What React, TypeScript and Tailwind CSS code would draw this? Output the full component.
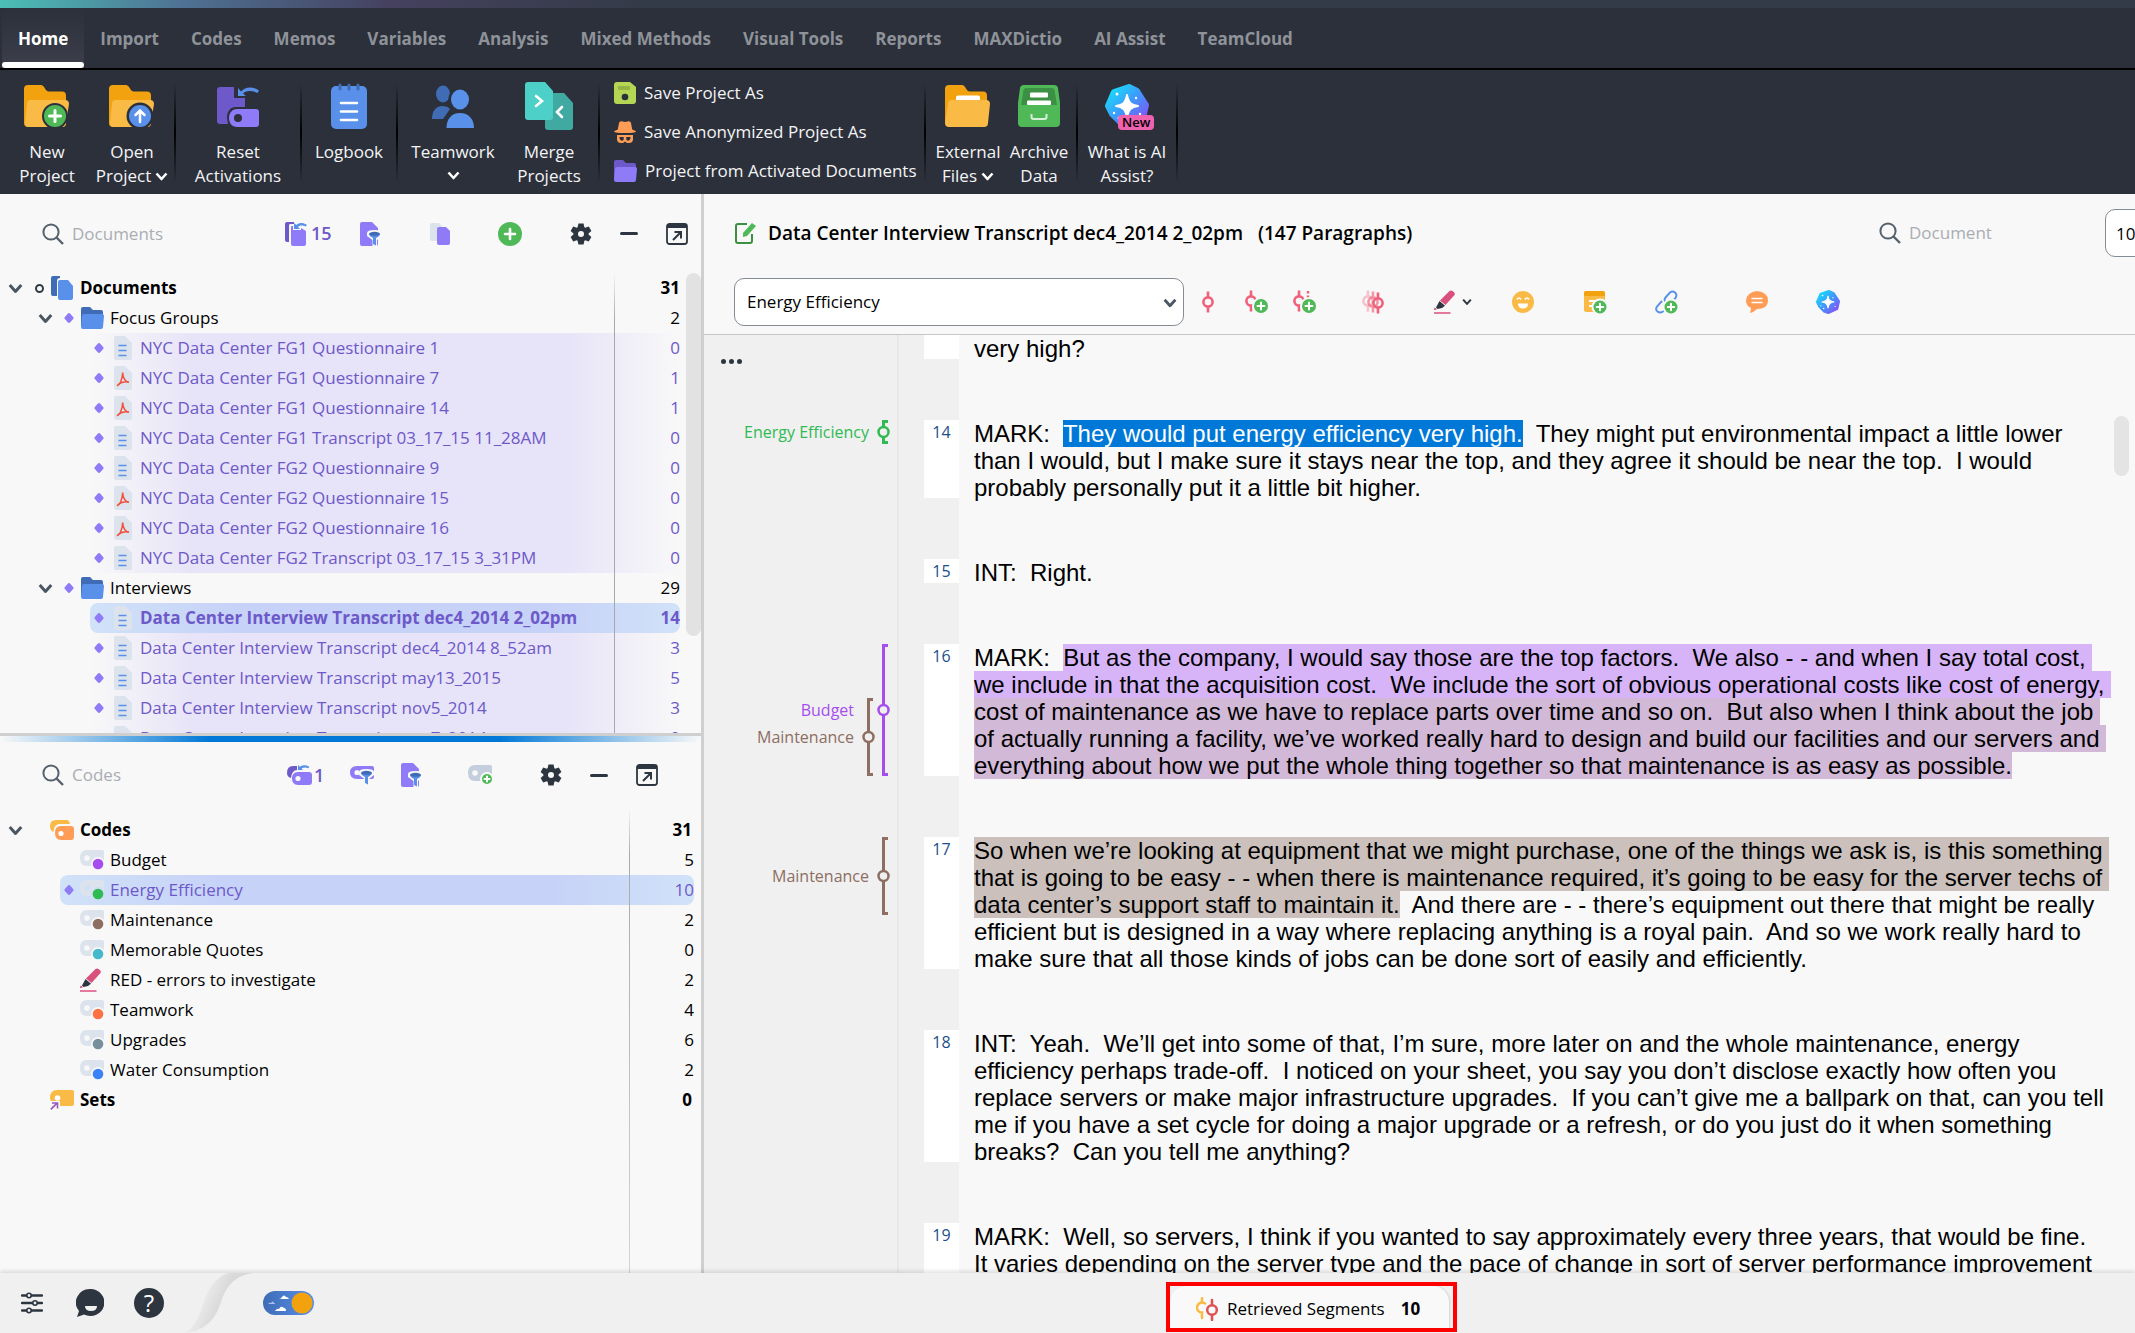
import { useState } from 'react';
import type { ReactNode } from 'react';

type DocKind = 'text' | 'pdf';

interface DocItem {
  name: string;
  kind: DocKind;
  count: number;
  selected?: boolean;
}

interface CodeItem {
  name: string;
  color: string;
  count: number;
  selected?: boolean;
  marker?: boolean;
}

interface Coding {
  label: string;
  color: string;
  top: number;
  height: number;
  knob: number;
  lane: number;
  labelRight: number;
}

interface Paragraph {
  no: number;
  body: ReactNode;
  codings?: Coding[];
}

const TABS = [
  'Home', 'Import', 'Codes', 'Memos', 'Variables', 'Analysis', 'Mixed Methods',
  'Visual Tools', 'Reports', 'MAXDictio', 'AI Assist', 'TeamCloud',
];

const FOCUS_GROUPS: DocItem[] = [
  { name: 'NYC Data Center FG1 Questionnaire 1', kind: 'text', count: 0 },
  { name: 'NYC Data Center FG1 Questionnaire 7', kind: 'pdf', count: 1 },
  { name: 'NYC Data Center FG1 Questionnaire 14', kind: 'pdf', count: 1 },
  { name: 'NYC Data Center FG1 Transcript 03_17_15 11_28AM', kind: 'text', count: 0 },
  { name: 'NYC Data Center FG2 Questionnaire 9', kind: 'text', count: 0 },
  { name: 'NYC Data Center FG2 Questionnaire 15', kind: 'pdf', count: 0 },
  { name: 'NYC Data Center FG2 Questionnaire 16', kind: 'pdf', count: 0 },
  { name: 'NYC Data Center FG2 Transcript 03_17_15 3_31PM', kind: 'text', count: 0 },
];

const INTERVIEWS: DocItem[] = [
  { name: 'Data Center Interview Transcript dec4_2014 2_02pm', kind: 'text', count: 14, selected: true },
  { name: 'Data Center Interview Transcript dec4_2014 8_52am', kind: 'text', count: 3 },
  { name: 'Data Center Interview Transcript may13_2015', kind: 'text', count: 5 },
  { name: 'Data Center Interview Transcript nov5_2014', kind: 'text', count: 3 },
  { name: 'Data Center Interview Transcript nov7_2014', kind: 'text', count: 0 },
];

const CODES: CodeItem[] = [
  { name: 'Budget', color: '#a64df0', count: 5 },
  { name: 'Energy Efficiency', color: '#2fbb52', count: 10, selected: true },
  { name: 'Maintenance', color: '#8d6e63', count: 2 },
  { name: 'Memorable Quotes', color: '#45b9cb', count: 0 },
  { name: 'RED - errors to investigate', color: '#d9507d', count: 2, marker: true },
  { name: 'Teamwork', color: '#ff7043', count: 4 },
  { name: 'Upgrades', color: '#78909c', count: 6 },
  { name: 'Water Consumption', color: '#3b82f6', count: 2 },
];

const PARAGRAPHS: Paragraph[] = [
  {
    no: 14,
    body: (
      <>
        {'MARK:  '}
        <span className="bg-[#0078d7] text-white">They would put energy efficiency very high.</span>
        {'  They might put environmental impact a little lower than I would, but I make sure it stays near the top, and they agree it should be near the top.  I would probably personally put it a little bit higher.'}
      </>
    ),
    codings: [{ label: 'Energy Efficiency', color: '#2fbb52', top: 0, height: 24, knob: 12, lane: 15, labelRight: 29 }],
  },
  { no: 15, body: 'INT:  Right.' },
  {
    no: 16,
    body: (
      <>
        {'MARK:  '}
        <span className="bg-[#d6b4f7]">
          {'But as the company, I would say those are the top factors.  We also - - and when I say total cost, we include in that the acquisition cost.  We include the sort of obvious operational costs like cost of energy, '}
        </span>
        <span className="bg-[#d2b9d8]">
          {'cost of maintenance as we have to replace parts over time and so on.  But also when I think about the job of actually running a facility, we’ve worked really hard to design and build our facilities and our servers and everything about how we put the whole thing together so that maintenance is as easy as possible.'}
        </span>
      </>
    ),
    codings: [
      { label: 'Budget', color: '#a64df0', top: 0, height: 132, knob: 66, lane: 15, labelRight: 44 },
      { label: 'Maintenance', color: '#8d6e63', top: 54, height: 78, knob: 93, lane: 30, labelRight: 44 },
    ],
  },
  {
    no: 17,
    body: (
      <>
        <span className="bg-[#cbc0bb]">
          {'So when we’re looking at equipment that we might purchase, one of the things we ask is, is this something that is going to be easy - - when there is maintenance required, it’s going to be easy for the server techs of data center’s support staff to maintain it.'}
        </span>
        {'  And there are - - there’s equipment out there that might be really efficient but is designed in a way where replacing anything is a royal pain.  And so we work really hard to make sure that all those kinds of jobs can be done sort of easily and efficiently.'}
      </>
    ),
    codings: [{ label: 'Maintenance', color: '#8d6e63', top: 0, height: 78, knob: 39, lane: 15, labelRight: 29 }],
  },
  {
    no: 18,
    body: 'INT:  Yeah.  We’ll get into some of that, I’m sure, more later on and the whole maintenance, energy efficiency perhaps trade-off.  I noticed on your sheet, you say you don’t disclose exactly how often you replace servers or make major infrastructure upgrades.  If you can’t give me a ballpark on that, can you tell me if you have a set cycle for doing a major upgrade or a refresh, or do you just do it when something breaks?  Can you tell me anything?',
  },
  {
    no: 19,
    body: 'MARK:  Well, so servers, I think if you wanted to say approximately every three years, that would be fine.  It varies depending on the server type and the pace of change in sort of server performance improvement',
  },
];

/* ---------- small icons ---------- */

function Chevron({ className = 'text-white', size = 13 }: { className?: string; size?: number }) {
  return (
    <svg width={size} height={size} viewBox="0 0 13 13" fill="none" className={`shrink-0 ${className}`}>
      <path d="M1.5 3.5 6.5 9l5-5.5" stroke="currentColor" strokeWidth="2.6" strokeLinejoin="round" />
    </svg>
  );
}

function SearchIcon() {
  return (
    <svg width="22" height="22" viewBox="0 0 22 22" fill="none" stroke="#56616e" strokeWidth="2" className="shrink-0">
      <circle cx="9" cy="9" r="7.6" />
      <path d="m14.5 14.5 6.5 6.5" strokeWidth="2.4" />
    </svg>
  );
}

function PlusBadge({ cx, cy, r, ring }: { cx: number; cy: number; r: number; ring: string }) {
  const a = r * 0.5;
  return (
    <g>
      <circle cx={cx} cy={cy} r={r + 2} fill={ring} />
      <circle cx={cx} cy={cy} r={r} fill="#50b957" />
      <path d={`M${cx - a} ${cy}h${2 * a}M${cx} ${cy - a}v${2 * a}`} stroke="#fff" strokeWidth={r > 8 ? 3 : 2} strokeLinecap="round" />
    </g>
  );
}

function FolderShape() {
  return (
    <>
      <path d="M0 4a4 4 0 0 1 4-4h12c2 0 3 .6 4 2l2 3c1 1 2 1.5 4 1.5h12a4 4 0 0 1 4 4V38a4 4 0 0 1-4 4H4a4 4 0 0 1-4-4Z" fill="#f2a20f" />
      <path d="M3 19a4 4 0 0 1 4-4h34a4 4 0 0 1 4 4l-3 19a4 4 0 0 1-4 4H5a4 4 0 0 1-4-4Z" fill="#fabb46" />
    </>
  );
}

function NewProjectIcon() {
  return (
    <svg width="46" height="44" viewBox="0 -1 46 44">
      <FolderShape />
      <PlusBadge cx={31} cy={31} r={11} ring="#2b303b" />
    </svg>
  );
}

function OpenProjectIcon() {
  return (
    <svg width="46" height="44" viewBox="0 -1 46 44">
      <FolderShape />
      <circle cx="31" cy="31" r="13.5" fill="#2b303b" />
      <circle cx="31" cy="31" r="11" fill="#5990ea" />
      <path d="M31 37V26M26.5 30l4.5-4.5 4.5 4.5" stroke="#fff" strokeWidth="2.5" fill="none" strokeLinecap="round" />
    </svg>
  );
}

function ResetIcon() {
  return (
    <svg width="44" height="44" viewBox="0 -1 44 44">
      <path d="M4 2h14v11h11v9h-9c-6 0-9 5-9 10 0 3 1 5 1 7H4a3 3 0 0 1-3-3V5a3 3 0 0 1 3-3Z" fill="#6d59c9" />
      <path d="M22 3v8h8l-3-2.500c4-3.500 9-3 14.500-.5l1.500-2.500C37 1.500 30 1 25 6.500Z" fill="#5990ea" />
      <path d="M21 24h19a3 3 0 0 1 3 3v12a3 3 0 0 1-3 3H21c-5 0-8-4-8-9s3-9 8-9Z" fill="#8f7af8" />
      <circle cx="22" cy="33" r="4" fill="#2b303b" />
    </svg>
  );
}

function LogbookIcon() {
  return (
    <svg width="36" height="46" viewBox="0 -2 36 46">
      <rect y="1" width="36" height="43" rx="5" fill="#5990ea" />
      <path d="M9 0v4M18 0v4M27 0v4" stroke="#3f6cb5" strokeWidth="3" strokeLinecap="round" />
      <path d="M10 18h16M10 26.500h16M10 35h16" stroke="#fff" strokeWidth="2.600" strokeLinecap="round" />
    </svg>
  );
}

function TeamworkIcon() {
  return (
    <svg width="42" height="44" viewBox="0 -1 42 44">
      <ellipse cx="11" cy="9" rx="7" ry="8.500" fill="#3f6cb5" />
      <path d="M0 34c0-8 4-13 10-13 4 0 6 1 8 3l-7 10Z" fill="#3f6cb5" />
      <ellipse cx="28" cy="14" rx="11.500" ry="12" fill="#2b303b" />
      <ellipse cx="28" cy="14.500" rx="9" ry="10" fill="#5990ea" />
      <path d="M12 44c0-10 6-18 16-18v18Z" fill="#2b303b" />
      <path d="M14.500 43c0-9 5-15 13.500-15s14 6 14 15Z" fill="#5990ea" />
    </svg>
  );
}

function MergeIcon() {
  return (
    <svg width="48" height="48" viewBox="0 0 48 48">
      <path d="M20 14a3 3 0 0 1 3-3h16l9 10v24a3 3 0 0 1-3 3H23a3 3 0 0 1-3-3Z" fill="#40a9a2" />
      <path d="M0 3a3 3 0 0 1 3-3h17l8 9v26a3 3 0 0 1-3 3H3a3 3 0 0 1-3-3Z" fill="#4dd0c7" />
      <path d="m11 14 6 5-6 5M37 25l-5 5 5 5" stroke="#fff" strokeWidth="2.600" fill="none" strokeLinecap="round" />
    </svg>
  );
}

function SaveIcon() {
  return (
    <svg width="22" height="22" viewBox="0 0 22 22">
      <path d="M0 3a3 3 0 0 1 3-3h13l6 5v14a3 3 0 0 1-3 3H3a3 3 0 0 1-3-3Z" fill="#b4d654" />
      <rect x="4" y="4" width="12" height="4" rx="1" fill="#93b343" />
      <circle cx="11" cy="15" r="3.300" fill="#2b303b" />
    </svg>
  );
}

function AnonymousIcon() {
  return (
    <svg width="22" height="22" viewBox="0 0 22 22" fill="#ff9d57">
      <path d="M5 2Q5.500 0 7.500.2L11 1l3.500-.8Q16.500 0 17 2l1.200 6.500Q22 9.800 22 10.800 21 12 11 12T0 10.800Q0 9.800 3.800 8.500Z" />
      <path d="M3 14h16v4c0 3-2 4-4 4h-2l-2-1.500L9 22H7c-2 0-4-1-4-4Z" />
      <path d="M5.500 16h4.200v2.500q-.5 1.200-2 1.200-2.200-.5-2.200-3.700ZM12.300 16h4.200q0 3.200-2.200 3.700-1.500 0-2-1.200Z" fill="#2b303b" />
    </svg>
  );
}

function MiniFolder({ dark, light }: { dark: string; light: string }) {
  return (
    <svg width="23" height="22" viewBox="0 0 23 22" className="shrink-0">
      <path d="M0 2a2 2 0 0 1 2-2h7l3 3h8a2 2 0 0 1 2 2v14H0Z" fill={dark} />
      <path d="M1 9q0-2 2-2h18q2 0 2 2l-1 11q0 2-2 2H2q-2 0-2-2Z" fill={light} />
    </svg>
  );
}

function ExternalFilesIcon() {
  return (
    <svg width="46" height="44" viewBox="0 -1 46 44">
      <path d="M0 4a4 4 0 0 1 4-4h12c2 0 3 .6 4 2l2 3c1 1 2 1.500 4 1.500h12a4 4 0 0 1 4 4V38H0Z" fill="#f2a20f" />
      <rect x="11" y="10.500" width="24" height="10" rx="2" fill="#fff" />
      <path d="M3 19a4 4 0 0 1 4-4h34a4 4 0 0 1 4 4l-2 19a4 4 0 0 1-4 4H4a4 4 0 0 1-4-4Z" fill="#fabb46" />
    </svg>
  );
}

function ArchiveIcon() {
  return (
    <svg width="42" height="44" viewBox="0 -1 42 44">
      <path d="M6 0h30a4 4 0 0 1 4 3l2 15v20a4 4 0 0 1-4 4H4a4 4 0 0 1-4-4V18L2 3a4 4 0 0 1 4-3Z" fill="#50b957" />
      <path d="M8 3h26q2 0 2.500 2L39 20H3L5.500 5Q6 3 8 3Z" fill="#3c9044" />
      <rect x="12" y="7.500" width="18" height="5" rx="1" fill="#fff" />
      <rect x="9" y="15.500" width="24" height="4.500" rx="1" fill="#fff" />
      <path d="M13.500 29v3q0 2 2 2h11q2 0 2-2v-3" stroke="#d8f0da" strokeWidth="2" fill="none" />
    </svg>
  );
}

function AiGem({ size, id }: { size: number; id: string }) {
  return (
    <svg width={size} height={size} viewBox="0 0 44 44" className="shrink-0">
      <defs>
        <linearGradient id={id} x1="0" y1="0" x2="44" y2="44" gradientUnits="userSpaceOnUse">
          <stop offset="0.1" stopColor="#17e0fb" />
          <stop offset="0.500" stopColor="#3f97fb" />
          <stop offset="1" stopColor="#9a3cf7" />
        </linearGradient>
      </defs>
      <path d="M9 8 24 3l8 4 9 14-3 13-15 7-7-2L7 30 3 22Z" fill={`url(#${id})`} stroke={`url(#${id})`} strokeWidth="6" strokeLinejoin="round" />
      <path d="M22 11c1.500 8 4 10 11 11-7 1-9.500 3.500-11 11-1.500-7.500-4-10-11-11 7-1 9.500-3 11-11Z" fill="#fff" stroke="#fff" strokeWidth="2" strokeLinejoin="round" />
      <circle cx="12" cy="10" r="1.500" fill="#fff" />
      <circle cx="31" cy="14" r="1.200" fill="#fff" />
      <circle cx="9" cy="29" r="1.200" fill="#fff" />
      <circle cx="35" cy="30" r="1.200" fill="#fff" />
      <circle cx="14" cy="34" r="1.500" fill="#fff" />
    </svg>
  );
}

function FileFilterIcon() {
  return (
    <svg width="21" height="24" viewBox="0 0 21 24">
      <path d="M2 0h10l6 6v16q0 2-2 2H2q-2 0-2-2V2q0-2 2-2Z" fill="#8f7af8" />
      <Funnel />
    </svg>
  );
}

function Funnel() {
  return (
    <g>
      <path d="M7 11q0-3 7.500-3T22 11v3l-5 4v6h-4.500v-6L7 14Z" fill="#f8f8f8" />
      <path d="M9 12q0 2 4 4v6l3 1.500V16q4-2 4-4Z" fill="#5990ea" />
      <ellipse cx="14.500" cy="11.800" rx="5.500" ry="2" fill="#3f6cb5" />
    </g>
  );
}

function ActivatedDocsIcon() {
  return (
    <svg width="22" height="24" viewBox="0 0 22 24">
      <path d="M2 0h7v2H5q-1 0-1 2v16H2q-2 0-2-2V2q0-2 2-2Z" fill="#6d59c9" />
      <path d="M7 4h1v4h8V6l5 3v13q0 2-2 2H8q-2 0-2-2V5q0-1 1-1Z" fill="#8f7af8" />
      <path d="M9 1v6h6l-2-2c2-2 4-2 8-.5l.8-1.700C17 0 13.500 1 11.300 3Z" fill="#5990ea" />
    </svg>
  );
}

function ActivatedCodesIcon() {
  return (
    <svg width="25" height="20" viewBox="0 0 25 20">
      <path d="M6 1h4v4q-5 0-6 8-4-1-4-5 0-7 6-7Z" fill="#6d59c9" />
      <path d="M11 0v5h5l-1.500-1.500q3-2 7-.3l.8-1.500Q17 -1 13 1.800Z" fill="#5990ea" />
      <path d="M11 7h11q3 0 3 3v7q0 3-3 3H11q-6 0-6-6.500T11 7Z" fill="#8f7af8" />
      <circle cx="11" cy="13.500" r="2.600" fill="#f8f8f8" />
    </svg>
  );
}

function CodeFilterIcon() {
  return (
    <svg width="25" height="20" viewBox="0 0 25 20">
      <path d="M7 1h15q2 0 2 2v9q0 2-2 2H7q-7 0-7-6.500T7 1Z" fill="#8f7af8" />
      <circle cx="7" cy="7.500" r="2.600" fill="#f8f8f8" />
      <g transform="translate(2 -4)">
        <Funnel />
      </g>
    </svg>
  );
}

function GearIcon() {
  return (
    <svg width="22" height="22" viewBox="-11 -11 22 22" fill="#2d3640">
      {[0, 60, 120, 180, 240, 300].map(a => (
        <path key={a} d="M-2.600-10.500h5.200l.9 4.500h-7Z" transform={`rotate(${a})`} />
      ))}
      <path fillRule="evenodd" d="M0-7.500a7.500 7.500 0 1 1 0 15a7.500 7.500 0 1 1 0-15M0-3a3 3 0 1 0 0 6a3 3 0 1 0 0-6" />
    </svg>
  );
}

function PopOutIcon() {
  return (
    <svg width="22" height="22" viewBox="0 0 22 22" fill="none">
      <rect x="1" y="1" width="20" height="20" rx="2.500" stroke="#2d3640" strokeWidth="1.800" />
      <path d="M1 1h20v4H1Z" fill="#2d3640" />
      <path d="m7 17 7.500-7.500M8.500 9H15v6.500" stroke="#2d3640" strokeWidth="2" />
    </svg>
  );
}

function Diamond() {
  return (
    <svg width="10" height="10" viewBox="0 0 10 10" className="shrink-0">
      <path d="M5 0q.7 0 1.300.8l3 3.400q.6.800 0 1.600l-3 3.400q-1.300 1.600-2.600 0l-3-3.400q-.6-.8 0-1.600l3-3.400Q4.300 0 5 0Z" fill="#8f7af8" />
    </svg>
  );
}

function FileIcon({ kind }: { kind: DocKind }) {
  return (
    <svg width="18" height="24" viewBox="0 0 18 24" className="shrink-0">
      <path d="M2 0h9l7 7v15q0 2-2 2H2q-2 0-2-2V2q0-2 2-2Z" fill="#dce3ec" />
      {kind === 'text' ? (
        <path d="M4.500 9.500h8M4.500 14.500h8M4.500 19.500h8" stroke="#5990ea" strokeWidth="1.600" />
      ) : (
        <path d="M3.500 19.500c2-.5 5-6 5.200-13 .1 5 2.300 9.500 6.300 9.700-4-1-7.500-.4-11 2.500" stroke="#f0503c" strokeWidth="1.500" fill="none" strokeLinecap="round" />
      )}
    </svg>
  );
}

function CodeIcon({ color }: { color: string }) {
  return (
    <svg width="24" height="20" viewBox="0 0 24 20" className="shrink-0">
      <mask id={`cut${color.slice(1)}`}>
        <rect width="24" height="20" fill="#fff" />
        <circle cx="18" cy="14" r="7" fill="#000" />
        <circle cx="7" cy="8" r="2.800" fill="#000" />
      </mask>
      <path d="M7 0h15q2 0 2 2v12q0 2-2 2H7q-7 0-7-8T7 0Z" fill="#dce3ec" mask={`url(#cut${color.slice(1)})`} />
      <circle cx="18" cy="14" r="5.300" fill={color} />
    </svg>
  );
}

function MarkerIcon({ size = 22 }: { size?: number }) {
  return (
    <svg width={size} height={size + 2} viewBox="0 0 22 24" className="shrink-0">
      <path d="M15.500 1q1.500-1.200 3 0l1.500 1.300q1.500 1.500.3 3L11.500 15 6 10.500Z" fill="#d9507d" />
      <path d="M5.500 11 11 15.800 8 18l-4.500 1L2 17.500Z" fill="#2d3640" />
      <path d="M.5 17.500 3 19l-1.500 1H0ZM0 22.200h16.500v1.600H0Z" fill="#d9507d" />
    </svg>
  );
}

function CodeRing({ x = 0, color = '#f0617c', opacity = 1 }: { x?: number; color?: string; opacity?: number }) {
  return (
    <g stroke={color} strokeWidth="2.600" fill="none" opacity={opacity}>
      <circle cx={6 + x} cy="11" r="4.600" />
      <path d={`M${6 + x} .5v5.500M${6 + x} 16v5.500`} />
    </g>
  );
}

/* ---------- ribbon ---------- */

function RibbonButton({ icon, lines, chevron, width }: { icon: ReactNode; lines: string[]; chevron?: boolean; width: string }) {
  return (
    <button className={`flex flex-col items-center ${width}`}>
      <span className="flex h-[54px] items-center">{icon}</span>
      <span className="mt-[7px] text-center text-[17px] leading-6 whitespace-nowrap text-[#f4f4f5]">
        {lines[0]}
        <br />
        <span className="inline-flex items-center gap-1">
          {lines[1]}
          {chevron && <Chevron />}
        </span>
      </span>
    </button>
  );
}

function RibbonDivider() {
  return <div className="mt-1 h-[100px] w-[2px] shrink-0 bg-linear-to-b from-transparent via-black to-transparent" />;
}

function Ribbon() {
  return (
    <div className="flex h-[124px] items-start bg-[#2b303b] pt-[9px] pl-1">
      <RibbonButton width="w-[86px]" icon={<NewProjectIcon />} lines={['New', 'Project']} />
      <RibbonButton width="w-[84px]" icon={<OpenProjectIcon />} lines={['Open', 'Project']} chevron />
      <RibbonDivider />
      <RibbonButton width="w-[124px]" icon={<ResetIcon />} lines={['Reset', 'Activations']} />
      <RibbonDivider />
      <RibbonButton width="w-[94px]" icon={<LogbookIcon />} lines={['Logbook', '']} />
      <RibbonDivider />
      <RibbonButton width="w-[110px]" icon={<TeamworkIcon />} lines={['Teamwork', '']} chevron />
      <RibbonButton width="mr-2 w-[82px]" icon={<MergeIcon />} lines={['Merge', 'Projects']} />
      <RibbonDivider />
      <div className="flex w-[324px] flex-col gap-[15px] pt-[2px] pl-[14px] text-[17px] leading-6 whitespace-nowrap text-[#f4f4f5]">
        <button className="flex items-center gap-2"><SaveIcon />Save Project As</button>
        <button className="flex items-center gap-2"><AnonymousIcon />Save Anonymized Project As</button>
        <button className="flex items-center gap-2"><MiniFolder dark="#6d59c9" light="#8f7af8" />Project from Activated Documents</button>
      </div>
      <RibbonDivider />
      <RibbonButton width="w-[84px]" icon={<ExternalFilesIcon />} lines={['External', 'Files']} chevron />
      <RibbonButton width="mr-2 w-[58px]" icon={<ArchiveIcon />} lines={['Archive', 'Data']} />
      <RibbonDivider />
      <RibbonButton
        width="w-[98px]"
        icon={
          <span className="relative">
            <AiGem size={44} id="gemLarge" />
            <span className="absolute top-[31px] left-[13px] rounded bg-[#ee62b0] px-1 text-[13px] leading-[15px] font-semibold text-black">New</span>
          </span>
        }
        lines={['What is AI', 'Assist?']}
      />
      <RibbonDivider />
    </div>
  );
}

/* ---------- trees ---------- */

const SELECTED_ROW = 'rounded-lg bg-[linear-gradient(to_right,#d0e2f8,#c7d2f8_25%,#c7d2f8_78%,#d0e2f8)]';

function Count({ children }: { children: ReactNode }) {
  return <span className="ml-auto text-right">{children}</span>;
}

function GroupRow({ name, count }: { name: string; count: number }) {
  return (
    <li className="flex h-[30px] items-center pr-[21px] pl-[38px]">
      <Chevron className="text-[#4b5663]" size={15} />
      <span className="ml-[11px]"><Diamond /></span>
      <span className="mr-[6px] ml-[7px]"><MiniFolder dark="#3f6cb5" light="#5990ea" /></span>
      {name}
      <Count>{count}</Count>
    </li>
  );
}

function DocRow({ doc }: { doc: DocItem }) {
  const tone = doc.selected
    ? `${SELECTED_ROW} font-bold`
    : 'bg-[linear-gradient(to_right,transparent,#e7e3f8_18%,#e7e3f8_80%,transparent)]';
  return (
    <li className={`mr-[21px] ml-[90px] flex h-[30px] items-center pl-1 text-[#6d59c9] ${tone}`}>
      <Diamond />
      <span className="mr-2 ml-[10px]"><FileIcon kind={doc.kind} /></span>
      {doc.name}
      <Count>{doc.count}</Count>
    </li>
  );
}

function DocumentsPanel() {
  return (
    <section className="flex h-[539px] shrink-0 flex-col">
      <div className="flex h-[79px] shrink-0 items-center pl-[42px]">
        <label htmlFor="docSearch"><SearchIcon /></label>
        <input id="docSearch" placeholder="Documents" aria-label="Documents" className="ml-2 w-[213px] bg-transparent text-[17px] outline-none placeholder:text-[#a9adb3]" />
        <button className="flex w-[75px] items-center gap-1 text-[18px] font-semibold text-[#6d59c9]"><ActivatedDocsIcon />15</button>
        <button aria-label="Filter documents"><FileFilterIcon /></button>
        <button aria-label="Copy" className="ml-[49px]">
          <svg width="20" height="22" viewBox="0 0 20 22">
            <path d="M2 0h7l3 3v15H2q-2 0-2-2V2q0-2 2-2Z" fill="#dce3ec" />
            <path d="M9 4h7l4 4v12q0 2-2 2H9q-2 0-2-2V6q0-2 2-2Z" fill="#8f7af8" />
          </svg>
        </button>
        <button aria-label="Add document" className="ml-[48px]">
          <svg width="24" height="24" viewBox="0 0 24 24">
            <circle cx="12" cy="12" r="12" fill="#50b957" />
            <path d="M12 7v10M7 12h10" stroke="#fff" strokeWidth="2.600" strokeLinecap="round" />
          </svg>
        </button>
        <button aria-label="Settings" className="ml-[48px]"><GearIcon /></button>
        <button aria-label="Minimize" className="ml-7 h-[3px] w-[18px] rounded bg-[#2d3640]" />
        <button aria-label="Undock" className="ml-7"><PopOutIcon /></button>
      </div>
      <div className="relative min-h-0 flex-1 overflow-hidden">
        <ul className="text-[17px] whitespace-nowrap">
          <li className="flex h-[30px] items-center pr-[21px] pl-2 font-bold">
            <Chevron className="text-[#4b5663]" size={15} />
            <span className="ml-3 size-[9px] rounded-full border-2 border-[#333b44]" />
            <svg width="22" height="24" viewBox="0 0 22 24" className="mr-[7px] ml-[7px]">
              <path d="M2 0h7v2q-3 0-3 3v15H2q-2 0-2-2V2q0-2 2-2Z" fill="#3f6cb5" />
              <path d="M9 4h8l5 6v12q0 2-2 2H9q-2 0-2-2V6q0-2 2-2Z" fill="#5990ea" />
            </svg>
            Documents
            <Count>31</Count>
          </li>
          <GroupRow name="Focus Groups" count={2} />
          {FOCUS_GROUPS.map(d => <DocRow key={d.name} doc={d} />)}
          <GroupRow name="Interviews" count={29} />
          {INTERVIEWS.map(d => <DocRow key={d.name} doc={d} />)}
        </ul>
        <div className="absolute inset-y-0 left-[614px] w-px bg-linear-to-b from-transparent via-[#a9a9ad] via-10% to-[#a9a9ad]" />
        <div className="absolute top-0 right-0 h-[363px] w-[15px] rounded-full bg-[#e2e2e2]" />
      </div>
    </section>
  );
}

function CodeRow({ code }: { code: CodeItem }) {
  return (
    <li className={`mr-[7px] ml-[60px] flex h-[30px] items-center pl-1 ${code.selected ? `${SELECTED_ROW} text-[#6d59c9]` : ''}`}>
      <span className="w-4">{code.selected && <Diamond />}</span>
      <span className="mr-[6px] flex w-6">{code.marker ? <MarkerIcon /> : <CodeIcon color={code.color} />}</span>
      {code.name}
      <Count>{code.count}</Count>
    </li>
  );
}

function CodesPanel() {
  return (
    <section className="flex min-h-0 flex-1 flex-col">
      <div className="h-[3px] shrink-0 bg-[#cfcfcf]" />
      <div className="h-[6px] shrink-0 bg-[linear-gradient(to_right,transparent,#0078d7_30%,#0078d7_71%,transparent)]" />
      <div className="flex h-[66px] shrink-0 items-center pl-[42px]">
        <label htmlFor="codeSearch"><SearchIcon /></label>
        <input id="codeSearch" placeholder="Codes" aria-label="Codes" className="ml-2 w-[215px] bg-transparent text-[17px] outline-none placeholder:text-[#a9adb3]" />
        <button className="flex w-[63px] items-center gap-[2px] text-[18px] font-semibold text-[#6d59c9]"><ActivatedCodesIcon />1</button>
        <button aria-label="Filter codes"><CodeFilterIcon /></button>
        <button aria-label="Filter by document" className="ml-[26px]"><FileFilterIcon /></button>
        <button aria-label="Add code" className="ml-[46px]">
          <svg width="25" height="20" viewBox="0 0 25 20">
            <path d="M7 0h15q2 0 2 2v12q0 2-2 2H7q-7 0-7-8T7 0Z" fill="#c5cedd" />
            <circle cx="7" cy="8" r="2.800" fill="#f8f8f8" />
            <PlusBadge cx={19} cy={14} r={5} ring="#f8f8f8" />
          </svg>
        </button>
        <button aria-label="Settings" className="ml-[47px]"><GearIcon /></button>
        <button aria-label="Minimize" className="ml-7 h-[3px] w-[18px] rounded bg-[#2d3640]" />
        <button aria-label="Undock" className="ml-7"><PopOutIcon /></button>
      </div>
      <div className="relative flex-1 pt-[7px]">
        <ul className="text-[17px] whitespace-nowrap">
          <li className="flex h-[30px] items-center pr-[9px] pl-2 font-bold">
            <Chevron className="text-[#4b5663]" size={15} />
            <svg width="24" height="20" viewBox="0 0 24 20" className="mr-[6px] ml-[27px]">
              <path d="M6 0h11q2 0 3 4H9Q4 5 4 10l-1 2Q0 10 0 6q0-6 6-6Z" fill="#fabb46" />
              <path d="M11 6h10q3 0 3 3v8q0 3-3 3H11q-6 0-6-7t6-7Z" fill="#ff9d57" />
              <circle cx="11" cy="13.500" r="2.600" fill="#fff" />
            </svg>
            Codes
            <Count>31</Count>
          </li>
          {CODES.map(c => <CodeRow key={c.name} code={c} />)}
          <li className="flex h-[30px] items-center pr-[9px] pl-[50px] font-bold">
            <svg width="24" height="20" viewBox="0 0 24 20" className="mr-[6px]">
              <path d="M7 0h15q2 0 2 2v12q0 2-2 2H10v-5H3l-2 0q-1-1-1-3 0-8 7-8Z" fill="#fabb46" />
              <circle cx="7.500" cy="8" r="2.800" fill="#fff" />
              <path d="m.8 19.400 6-6M2 13h5.500v5.500" stroke="#9b59b6" strokeWidth="1.600" fill="none" />
            </svg>
            Sets
            <Count>0</Count>
          </li>
        </ul>
        <div className="absolute inset-y-0 left-[629px] w-px bg-linear-to-b from-transparent via-[#a9a9ad] via-10% to-[#d4d4d4]" />
      </div>
    </section>
  );
}

/* ---------- document browser ---------- */

function CodingBracket({ coding }: { coding: Coding }) {
  return (
    <>
      <span
        className="absolute text-[16px] leading-6 whitespace-nowrap"
        style={{ right: coding.labelRight, top: coding.knob - 12, color: coding.color }}
      >
        {coding.label}
      </span>
      <svg
        className="absolute"
        width="14"
        height={coding.height}
        style={{ right: coding.lane - 8, top: coding.top }}
        fill="none"
        stroke={coding.color}
        strokeWidth="3"
      >
        <path d={`M11 1.500H6.500V${coding.height - 1.500}H11`} />
        <circle cx="6.500" cy={coding.knob - coding.top} r="5" fill="#f0f0f0" strokeWidth="2.500" />
      </svg>
    </>
  );
}

function ParagraphRow({ paragraph }: { paragraph: Paragraph }) {
  return (
    <div className="grid grid-cols-[194px_26px_35px_minmax(0,1fr)]">
      <div className="relative">
        {paragraph.codings?.map(c => <CodingBracket key={c.label} coding={c} />)}
      </div>
      <div />
      <div className="mb-[61px] bg-white text-center text-[16px] leading-6 text-[#1d4f8b]">{paragraph.no}</div>
      <p className="mr-[29px] mb-[58px] ml-[15px] text-[24px] leading-[27px] whitespace-pre-wrap text-black [font-family:'Liberation_Sans',Arial,sans-serif]">
        {paragraph.body}
      </p>
    </div>
  );
}

function DocumentBrowser() {
  const [code, setCode] = useState('Energy Efficiency');

  return (
    <main className="flex min-w-0 flex-1 flex-col overflow-hidden border-l-[3px] border-[#cfcfcf]">
      <header className="flex h-[78px] shrink-0 items-center pl-[30px]">
        <svg width="22" height="23" viewBox="0 0 22 23" fill="none" className="shrink-0">
          <path d="M13 2H4Q2 2 2 4v15q0 2 2 2h12q2 0 2-2v-7" stroke="#3c9044" strokeWidth="2" />
          <path d="M9 15V11L18 1l4 3-9 10Z" fill="#50b957" />
        </svg>
        <h1 className="ml-3 text-[19px] font-semibold whitespace-pre">
          {'Data Center Interview Transcript dec4_2014 2_02pm   (147 Paragraphs)'}
        </h1>
        <div className="ml-auto flex items-center">
          <label htmlFor="textSearch"><SearchIcon /></label>
          <input id="textSearch" placeholder="Document" aria-label="Document" className="ml-2 w-[196px] bg-transparent text-[17px] outline-none placeholder:text-[#a9adb3]" />
          <input
            aria-label="Zoom"
            defaultValue="100"
            className="-mr-[70px] h-12 w-[100px] rounded-[10px] border border-[#868c94] bg-white pl-[10px] text-[17px]"
          />
        </div>
      </header>

      <div className="flex h-[63px] shrink-0 items-start border-b border-[#c6c6c6] pt-[6px] pl-[30px]">
        <div className="relative">
          <select
            aria-label="Quick code"
            value={code}
            onChange={e => setCode(e.target.value)}
            className="h-12 w-[450px] appearance-none rounded-[10px] border border-[#868c94] bg-white pl-3 text-[17px] text-black"
          >
            {CODES.map(c => <option key={c.name}>{c.name}</option>)}
          </select>
          <span className="pointer-events-none absolute top-[18px] right-[7px]">
            <Chevron className="text-[#4b5663]" size={14} />
          </span>
        </div>
        <div className="flex h-12 items-center">
          <button aria-label="Code" className="ml-[18px]">
            <svg width="12" height="22" viewBox="0 0 12 22"><CodeRing /></svg>
          </button>
          <button aria-label="Code with new code" className="ml-[31px]">
            <svg width="24" height="24" viewBox="0 0 24 24">
              <CodeRing />
              <PlusBadge cx={16} cy={16} r={7} ring="#f8f8f8" />
            </svg>
          </button>
          <button aria-label="Code in vivo" className="ml-6">
            <svg width="24" height="24" viewBox="0 0 24 24">
              <CodeRing />
              <path d="M15 1v8" stroke="#f0617c" strokeWidth="2.400" strokeDasharray="2.400 2" />
              <PlusBadge cx={16} cy={16} r={7} ring="#f8f8f8" />
            </svg>
          </button>
          <button aria-label="Undo coding" className="ml-[45px]">
            <svg width="22" height="24" viewBox="0 0 22 24">
              <CodeRing opacity={0.350} />
              <g transform="translate(0 1)"><CodeRing x={5} opacity={0.650} /></g>
              <g transform="translate(0 2)"><CodeRing x={10} /></g>
            </svg>
          </button>
          <button aria-label="Highlight" className="ml-[50px] flex items-center gap-[6px]">
            <MarkerIcon />
            <Chevron className="text-[#2d3640]" size={10} />
          </button>
          <button aria-label="Emoticode" className="ml-10">
            <svg width="22" height="22" viewBox="0 0 22 22">
              <circle cx="11" cy="11" r="11" fill="#fabb46" />
              <path d="M5 8.500q2-3 4 0M13 8.500q2-3 4 0" stroke="#fff" strokeWidth="1.600" fill="none" />
              <path d="M6 12.500h10q0 5-5 5t-5-5Z" fill="#fff" />
            </svg>
          </button>
          <button aria-label="New memo" className="ml-[50px]">
            <svg width="24" height="24" viewBox="0 0 24 24">
              <rect y="1" width="21" height="21" rx="2" fill="#fabb46" />
              <path d="M2 1h17q2 0 2 2v3H0V3q0-2 2-2Z" fill="#f2a20f" />
              <path d="M5 11h8M5 16h4" stroke="#fff" strokeWidth="1.800" />
              <PlusBadge cx={16} cy={17} r={6.500} ring="#f8f8f8" />
            </svg>
          </button>
          <button aria-label="Insert link" className="ml-[47px]">
            <svg width="24" height="24" viewBox="0 0 24 24" fill="none" stroke="#5990ea" strokeWidth="1.900" strokeLinecap="round">
              <path d="M10 11Q9 9 10.500 7.500L15 2.500q2.500-2 5 0t.5 5.500L17 12M6.500 11.500 2 16.500q-2 3 .5 5t5.500 0l2-1.500" />
              <g strokeWidth="0"><PlusBadge cx={16} cy={17} r={6.500} ring="#f8f8f8" /></g>
            </svg>
          </button>
          <button aria-label="Comment" className="ml-[67px]">
            <svg width="22" height="22" viewBox="0 0 22 22">
              <path d="M11 0q11 1 11 9.500T11 18q-3 3-7 4 1-3 1-5Q0 15 0 9.500 1 1 11 0Z" fill="#ff9d57" />
              <path d="M5.500 7.500h11M5.500 11.500h11" stroke="#fff" strokeWidth="1.600" />
            </svg>
          </button>
          <button aria-label="AI Assist" className="ml-[48px]"><AiGem size={24} id="gemSmall" /></button>
        </div>
      </div>

      <div className="relative min-h-0 flex-1 overflow-hidden bg-[linear-gradient(to_right,#f0f0f0_255px,transparent_255px)]">
        <div className="absolute inset-y-0 left-[193px] w-[2px] bg-[#e8e8e8]" />
        <button aria-label="More" className="absolute top-6 left-[17px] flex gap-[3px]">
          <i className="size-[5px] rounded-full bg-[#2d3640]" />
          <i className="size-[5px] rounded-full bg-[#2d3640]" />
          <i className="size-[5px] rounded-full bg-[#2d3640]" />
        </button>
        <div className="relative grid grid-cols-[220px_35px_minmax(0,1fr)]">
          <div />
          <div className="mb-[61px] bg-white" />
          <p className="mb-[58px] ml-[15px] text-[24px] leading-[27px] [font-family:'Liberation_Sans',Arial,sans-serif]">very high?</p>
        </div>
        {PARAGRAPHS.map(p => <ParagraphRow key={p.no} paragraph={p} />)}
        <div className="absolute top-[81px] right-[6px] h-[60px] w-[15px] rounded-full bg-[#e4e4e4]" />
      </div>
    </main>
  );
}

/* ---------- status bar ---------- */

function StatusBar() {
  const [day, setDay] = useState(true);

  return (
    <footer className="relative flex h-[60px] shrink-0 items-center bg-[#f0f0f0] pl-[21px] shadow-[0_-2px_4px_rgba(0,0,0,0.12)]">
      <button aria-label="Options">
        <svg width="22" height="22" viewBox="0 0 22 22" stroke="#2d3640" strokeWidth="2.400" fill="#f0f0f0" strokeLinecap="round">
          <path d="M1 3.500h20M1 11h20M1 18.500h20" />
          <circle cx="8" cy="3.500" r="2.200" strokeWidth="1.600" />
          <circle cx="14" cy="11" r="2.200" strokeWidth="1.600" />
          <circle cx="8" cy="18.500" r="2.200" strokeWidth="1.600" />
        </svg>
      </button>
      <button aria-label="Feedback" className="ml-[33px]">
        <svg width="28" height="28" viewBox="0 0 28 28">
          <path d="M14 0a14 13.500 0 1 1-6 25.500L1 28l2-6A14 13.500 0 0 1 14 0Z" fill="#2d3640" />
          <path d="M9 17h12q0 5-6 5t-6-5Z" fill="#f0f0f0" />
        </svg>
      </button>
      <button aria-label="Help" className="ml-[30px] flex size-[30px] items-center justify-center rounded-full bg-[#2d3640] text-[24px] leading-[30px] text-white">
        ?
      </button>
      <svg width="70" height="60" viewBox="0 0 70 60" className="ml-[20px] shrink-0">
        <defs>
          <linearGradient id="swoosh" x1="14" y1="20" x2="37" y2="30" gradientUnits="userSpaceOnUse">
            <stop offset="0" stopColor="#f0f0f0" />
            <stop offset="1" stopColor="#d9d9d9" />
          </linearGradient>
        </defs>
        <path d="M0 60Q27 58 36 32 44 2 70 0H44Q26 6 18 34 12 54 0 60Z" fill="url(#swoosh)" />
      </svg>
      <label className="ml-[9px] cursor-pointer">
        <input type="checkbox" checked={day} onChange={() => setDay(!day)} aria-label="Light mode" className="sr-only" />
        <svg width="51" height="24" viewBox="0 0 51 24">
          <defs>
            <linearGradient id="sky">
              <stop offset="0" stopColor="#3f6cb5" />
              <stop offset="1" stopColor="#5990ea" />
            </linearGradient>
          </defs>
          <rect width="51" height="24" rx="12" fill="url(#sky)" />
          <path d="M16 8q2 0 3-2 2-3 4 0 2 0 3 2ZM12 20q2-3 4-2 2-4 5-1 2 0 2 3Z" fill="#fff" />
          <path d="M5 13q2-2 3-1 2-3 3 0 1 0 1 1Z" fill="#a9c3ec" />
          <circle cx="39" cy="12" r="10.500" fill="#f2a20f" />
        </svg>
      </label>
      <div className="absolute bottom-px left-[1166px] h-[50px] w-[291px] border-4 border-[#ff0000]">
        <button className="flex h-full w-[279px] items-center rounded-t-2xl bg-[#f9f9f9] pt-1 pl-[26px] text-[17px] shadow-[1px_0_2px_rgba(0,0,0,0.12)]">
          <svg width="22" height="24" viewBox="0 0 22 24" fill="none" strokeWidth="2.500" strokeLinecap="round">
            <path d="M6 1v4M9 6.500A5 5 0 1 0 6 15.500V21" stroke="#fabb46" />
            <circle cx="16" cy="13" r="4.800" stroke="#e05252" />
            <path d="M16 3v5M16 18v5" stroke="#e05252" />
          </svg>
          <span className="ml-[9px]">Retrieved Segments</span>
          <span className="ml-4 font-bold">10</span>
        </button>
      </div>
    </footer>
  );
}

export default function App() {
  const [tab, setTab] = useState('Home');

  return (
    <div className="flex h-screen flex-col overflow-hidden bg-[#f8f8f8] text-black [font-family:'Open_Sans','Noto_Sans',sans-serif]">
      <div className="h-2 shrink-0 bg-[linear-gradient(to_right,#4bbfb5,#4f7294_180px,#45415f_390px,#343b48_640px)]" />
      <nav className="flex h-[62px] shrink-0 items-stretch border-b-2 border-black bg-[#2b303b] pl-[2px]">
        {TABS.map(name => (
          <button
            key={name}
            onClick={() => setTab(name)}
            className={`relative px-4 pt-[2px] text-[17px] font-bold whitespace-nowrap ${
              tab === name ? 'bg-linear-to-b from-[#2b303b] to-[#3d3f4b] text-white' : 'text-[#8f9399]'
            }`}
          >
            {name}
            {tab === name && <span className="absolute inset-x-0 bottom-0 h-[6px] rounded bg-white" />}
          </button>
        ))}
      </nav>
      <Ribbon />
      <div className="flex min-h-0 flex-1">
        <aside className="flex w-[701px] shrink-0 flex-col">
          <DocumentsPanel />
          <CodesPanel />
        </aside>
        <DocumentBrowser />
      </div>
      <StatusBar />
    </div>
  );
}
